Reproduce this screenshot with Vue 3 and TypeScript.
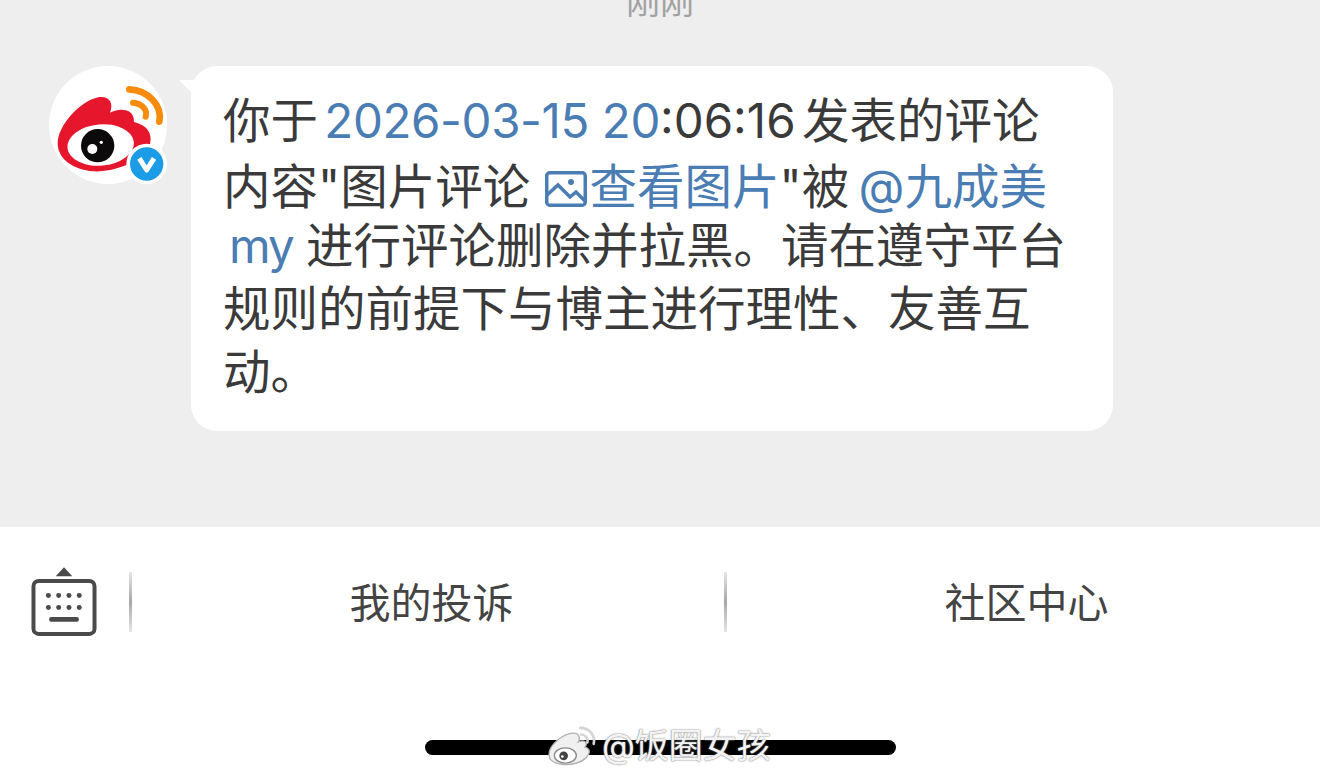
<!-- 私信通知页 - 评论被删除的系统消息 -->
<script setup lang="ts">
const actions: string[] = ['我的投诉', '社区中心'];
const dots: number[] = [145, 176, 207, 238];
</script>

<template>
  <div class="page">
    <section class="chat">
      <div class="time">刚刚</div>
      <div class="message">
        <svg class="avatar" viewBox="57 48 354 354" xmlns="http://www.w3.org/2000/svg">
          <circle cx="234" cy="225" r="177" fill="#fff" />
          <path d="M83 280C83 228 150 152 205 142C238 137 252 160 240 188C272 172 314 176 312 216C352 226 368 250 360 282C340 344 230 368 190 364C130 360 83 327 83 280Z" fill="#e6162d" />
          <ellipse cx="212" cy="285" rx="100" ry="62" transform="rotate(-5 212 285)" fill="#fff" />
          <circle cx="203" cy="287" r="50" fill="#0c0a0b" />
          <circle cx="187" cy="297" r="15" fill="#fff" />
          <circle cx="214" cy="277" r="5" fill="#fff" />
          <path d="M298 118C352 120 398 165 388 215" fill="none" stroke="#f78b0e" stroke-width="20" stroke-linecap="round" />
          <path d="M309 158C336 160 354 180 347 200" fill="none" stroke="#f78b0e" stroke-width="18" stroke-linecap="round" />
          <circle cx="350" cy="342" r="61" fill="#fff" />
          <circle cx="350" cy="342" r="50" fill="#1c9be6" />
          <path d="M328 325L350 360L372 325" fill="none" stroke="#fff" stroke-width="15" stroke-linejoin="round" />
        </svg>
        <div class="bubble">
          <div class="line">你于 <span class="link date">2026-03-15 20</span>:06:16 发表的评论</div>
          <div class="line second">内容"图片评论 <span class="link"><svg class="pic" viewBox="0 0 42 36" xmlns="http://www.w3.org/2000/svg">
            <rect x="1.75" y="1.75" width="38.5" height="32.5" rx="3" fill="none" stroke="currentColor" stroke-width="3.5" />
            <path d="M2 24L13 14L25 26L31 21L40 30" fill="none" stroke="currentColor" stroke-width="3.5" />
            <circle cx="26" cy="11" r="3" fill="currentColor" />
          </svg>查看图片</span>"被 <span class="link at">@九成美</span></div>
          <div class="line"><span class="link my">my</span> 进行评论删除并拉黑。请在遵守平台</div>
          <div class="line">规则的前提下与博主进行理性、友善互</div>
          <div class="line">动。</div>
        </div>
      </div>
    </section>

    <footer class="bar">
      <div class="switch">
        <svg class="keyboard" viewBox="90 80 204 214" xmlns="http://www.w3.org/2000/svg">
          <path d="M192 84L217 111H167Z" fill="#4a4a4a" />
          <rect x="100" y="125" width="184" height="160" rx="16" fill="none" stroke="#4a4a4a" stroke-width="12" />
          <g fill="#4a4a4a">
            <circle v-for="x in dots" :key="'a' + x" :cx="x" cy="169" r="7.5" />
            <circle v-for="x in dots" :key="'b' + x" :cx="x" cy="205" r="7.5" />
            <rect x="147" y="234" width="90" height="14" rx="7" />
          </g>
        </svg>
      </div>
      <div v-for="item in actions" :key="item" class="action">{{ item }}</div>
      <div class="home"></div>
      <div class="watermark">
        <svg class="mark" viewBox="440 40 150 125" xmlns="http://www.w3.org/2000/svg">
          <path d="M446 128C446 100 490 62 522 64C540 66 538 84 534 90C552 82 564 92 554 106C570 110 570 124 560 134C545 154 510 160 490 158C463 156 446 147 446 128Z" fill="#f0f0f0" stroke="#b0b0b0" stroke-width="4" />
          <ellipse cx="495" cy="131" rx="33" ry="23" fill="#fff" stroke="#8a8a8a" stroke-width="4" />
          <circle cx="490" cy="132" r="13" fill="#444" />
          <circle cx="486" cy="134" r="4" fill="#fff" />
          <path d="M540 48C566 48 586 70 580 96" fill="none" stroke="#d4d4d4" stroke-width="8" stroke-linecap="round" />
          <path d="M542 68C555 68 564 78 561 92" fill="none" stroke="#d4d4d4" stroke-width="8" stroke-linecap="round" />
        </svg>
        <span class="mark-text">@饭圈女孩</span>
      </div>
    </footer>
  </div>
</template>

<style scoped>
.page {
  width: 1320px;
  height: 779px;
  display: flex;
  flex-direction: column;
  overflow: hidden;
  font-family: Inter, "Noto Sans CJK SC", sans-serif;
}

.chat {
  height: 527px;
  background: #eeeeee;
}

.time {
  height: 66px;
  line-height: 4px;
  text-align: center;
  font-size: 34px;
  color: #a2a2a2;
}

.message {
  display: flex;
  align-items: flex-start;
  gap: 24px;
  padding-left: 49px;
}

.avatar {
  width: 118px;
  height: 118px;
  flex: none;
  overflow: visible;
}

.bubble {
  position: relative;
  width: 922px;
  height: 365px;
  box-sizing: border-box;
  padding: 23px 0 0 32px;
  background: #fff;
  border-radius: 26px;
  font-size: 47.5px;
  color: #3a3a3a;
  word-spacing: -7px;
}

.bubble::before {
  content: "";
  position: absolute;
  left: -12px;
  top: 14px;
  width: 20px;
  height: 20px;
  background: #fff;
  clip-path: polygon(0 0, 100% 0, 100% 100%);
}

.line {
  height: 63px;
  line-height: 63px;
  white-space: nowrap;
}

.second {
  margin-top: 3px;
  margin-bottom: -4px;
}

.link {
  color: #4a7db3;
}

.date {
  letter-spacing: -0.4px;
  word-spacing: 0;
}

.at {
  margin-left: 3px;
}

.my {
  margin: 0 7px 0 6px;
  letter-spacing: -2px;
}

.pic {
  width: 42px;
  height: 36px;
  margin: 0 3px 0 8px;
  vertical-align: -3px;
}

.bar {
  position: relative;
  flex: 1;
  display: flex;
  align-items: flex-start;
  background: #fff;
}

.switch {
  width: 129px;
  height: 60px;
  margin-top: 45px;
  display: flex;
  justify-content: center;
}

.keyboard {
  width: 68px;
  height: 71px;
  margin: -6px 0 0 -2px;
}

.action {
  width: 595px;
  height: 60px;
  box-sizing: border-box;
  padding-left: 10px;
  margin-top: 45px;
  line-height: 62px;
  text-align: center;
  font-size: 41px;
  color: #444;
  background: linear-gradient(rgba(190, 190, 190, 0.4), #a8a8a8, rgba(190, 190, 190, 0.4)) left / 3px 100% no-repeat;
}

.home {
  position: absolute;
  left: 425px;
  top: 213px;
  width: 471px;
  height: 15px;
  border-radius: 8px;
  background: #000;
}

.watermark {
  position: absolute;
  left: 547px;
  top: 198px;
  display: flex;
  align-items: center;
  gap: 5px;
}

.mark {
  width: 50px;
  height: 42px;
}

.mark-text {
  font-size: 34px;
  line-height: 42px;
  color: rgba(255, 255, 255, 0.92);
  text-shadow: 0 0 2px #888, 0 0 1px #888;
}
</style>

<style>
html,
body {
  margin: 0;
  background: #fff;
  overflow: hidden;
}
</style>
